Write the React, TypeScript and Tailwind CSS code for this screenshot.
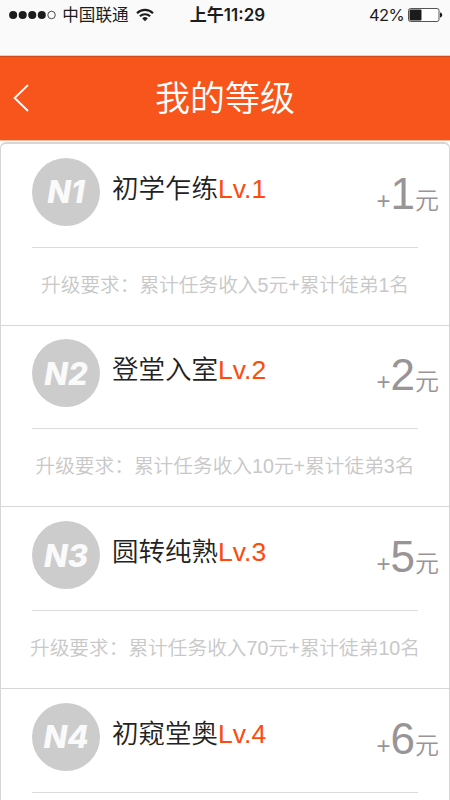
import React from 'react';

const levels = [
    { badge: 'N1', name: '初学乍练', level: 'Lv.1', bonus: '1', requirement: '累计任务收入5元+累计徒弟1名' },
    { badge: 'N2', name: '登堂入室', level: 'Lv.2', bonus: '2', requirement: '累计任务收入10元+累计徒弟3名' },
    { badge: 'N3', name: '圆转纯熟', level: 'Lv.3', bonus: '5', requirement: '累计任务收入70元+累计徒弟10名' },
    { badge: 'N4', name: '初窥堂奥', level: 'Lv.4', bonus: '6', requirement: '' },
];

function StatusBar() {
    return (
        <div className="h-[56px] bg-[#fafafa] border-b border-[#d9d4d2] shrink-0">
            <div className="grid grid-cols-3 items-center h-[30px] pl-[9px] pr-[7px] text-[#1c1c1c] font-['Inter','Noto_Sans_CJK_SC',sans-serif]">
                <div className="flex items-center">
                    <svg width="48" height="10" viewBox="0 0 48 10" fill="#1c1c1c">
                        <circle cx="4.2" cy="5" r="4.1" />
                        <circle cx="13.9" cy="5" r="4.1" />
                        <circle cx="23.6" cy="5" r="4.1" />
                        <circle cx="33.3" cy="5" r="4.1" />
                        <circle cx="43.2" cy="5" r="3.8" fill="none" stroke="#1c1c1c" strokeWidth="0.8" />
                    </svg>
                    <span className="ml-[6px] text-[16.6px] leading-none whitespace-nowrap">中国联通</span>
                    <svg className="ml-[7px] -mt-px shrink-0" width="18" height="14" viewBox="0 0 18 14" fill="none" stroke="#1c1c1c" strokeWidth="2.1">
                        <path d="M1 5.2a11.4 11.4 0 0 1 16 0" />
                        <path d="M3.9 8.3a7.3 7.3 0 0 1 10.2 0" />
                        <path d="M9 13.2 6.2 10.4a4 4 0 0 1 5.6 0Z" fill="#1c1c1c" stroke="none" />
                    </svg>
                </div>
                <p className="pl-[3px] text-center text-[17px] leading-none font-semibold whitespace-nowrap">上午11:29</p>
                <div className="flex items-center justify-end">
                    <span className="text-[16.5px] leading-none tracking-[-0.6px]">42%</span>
                    <svg className="ml-1" width="35" height="14" viewBox="0 0 35 14">
                        <rect x="0.5" y="0.5" width="30.5" height="13" rx="2" fill="#fff" stroke="#555" />
                        <rect x="1.5" y="1.5" width="12" height="11" rx="1" fill="#1c1c1c" />
                        <path d="M32 4.5C35 5 35 9 32 9.5Z" fill="#1c1c1c" />
                    </svg>
                </div>
            </div>
        </div>
    );
}

function Header() {
    return (
        <header className="grid grid-cols-[60px_1fr_60px] items-center h-[85px] shrink-0 bg-[#f8551c] border-t border-t-[#d24a17] border-b border-b-[#fbb9a0] text-white">
            <svg className="ml-[13px] -mt-[2px]" width="17" height="28" viewBox="0 0 17 28" fill="none" stroke="#fff" strokeWidth="1.8">
                <path d="M15 1 1.6 14 15 27" />
            </svg>
            <h1 className="text-center text-[35px] leading-none font-[350]">我的等级</h1>
        </header>
    );
}

export default function App() {
    return (
        <div className="flex flex-col w-[450px] h-[800px] overflow-hidden bg-white font-['Liberation_Sans','Noto_Sans_CJK_SC',sans-serif]">
            <StatusBar />
            <Header />
            <ul className="mt-px shrink-0 border border-t-2 border-[#d6d6d6] rounded-md">
                {levels.map((item) => (
                    <li key={item.badge} className="h-[181.7px] border-b border-[#d6d6d6]">
                        <div className="flex mx-[31px] h-[103.5px] pt-[13.8px] border-b border-[#dcdcdc]">
                            <div className="flex items-center justify-center w-[68px] h-[68px] shrink-0 rounded-full bg-[#cccccc] text-[#fafafa] text-[31px] leading-none font-extrabold italic font-['Inter',sans-serif]">
                                {item.badge}
                            </div>
                            <h2 className="ml-3 mt-[15px] text-[26.5px] leading-[32px] font-[350] text-[#222] whitespace-nowrap">
                                {item.name}
                                <span className="text-[#ff4a0c]">{item.level}</span>
                            </h2>
                            <p className="ml-auto -mr-[21px] mt-[11px] leading-[50px] text-[24px] font-[350] text-[#999496] whitespace-nowrap">
                                +<span className="text-[44px]">{item.bonus}</span>元
                            </p>
                        </div>
                        {item.requirement && (
                            <p className="pt-[22px] text-center text-[19.7px] leading-[30px] font-[350] text-[#c8c8c8] whitespace-nowrap">
                                升级要求：{item.requirement}
                            </p>
                        )}
                    </li>
                ))}
            </ul>
        </div>
    );
}
